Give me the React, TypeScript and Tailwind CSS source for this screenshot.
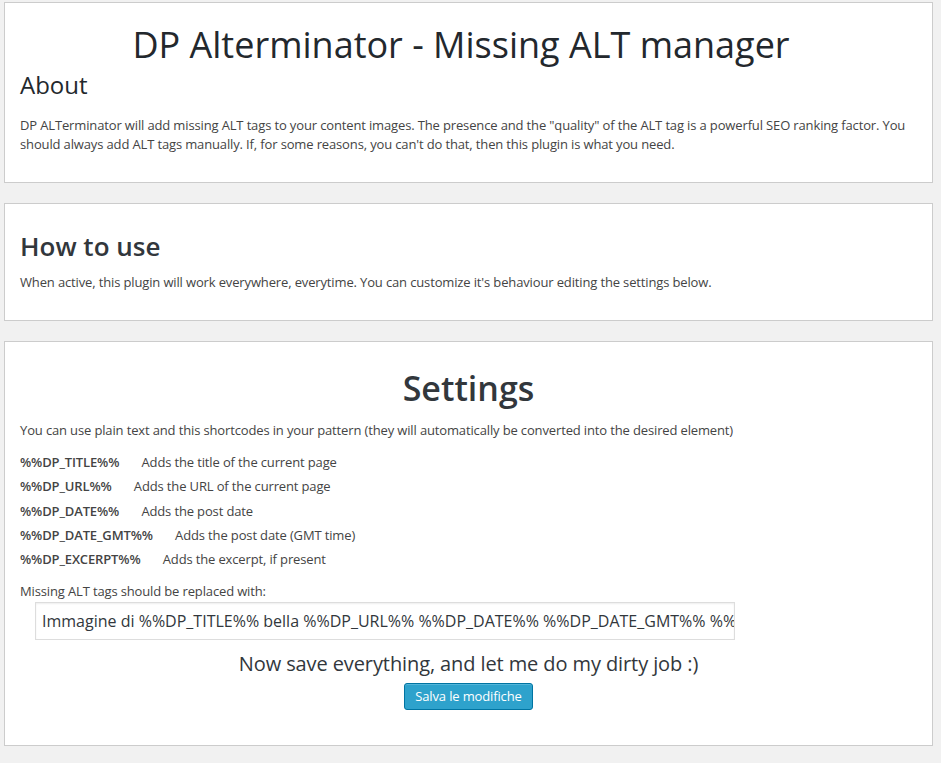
import React from "react";

const codes: [string, string][] = [
  ["%%DP_TITLE%%", "Adds the title of the current page"],
  ["%%DP_URL%%", "Adds the URL of the current page"],
  ["%%DP_DATE%%", "Adds the post date"],
  ["%%DP_DATE_GMT%%", "Adds the post date (GMT time)"],
  ["%%DP_EXCERPT%%", "Adds the excerpt, if present"],
];

export default function App() {
  return (
    <div
      className="min-h-[763px] w-full bg-[#f1f1f1] pt-[2px] pb-[17px]"
      style={{ fontFamily: '"Open Sans", "Liberation Sans", sans-serif' }}
    >
      <div className="ml-[4px] w-[929px] flex flex-col gap-[20px]">
        {/* About */}
        <section className="border border-[#cccccc] bg-white px-[15px] pt-[20px] pb-[28px]">
          <h1 className="pr-[15px] text-center text-[36px] leading-[43px] font-normal text-[#23282d]">
            DP Alterminator - Missing ALT manager
          </h1>
          <h2 className="mt-[4px] text-[24px] leading-[30px] font-normal text-[#23282d]">About</h2>
          <p className="mt-[16px] text-[13px] leading-[19px] tracking-[-0.14px] text-[#444444]">
            DP ALTerminator will add missing ALT tags to your content images. The presence and the "quality" of the ALT tag is a powerful SEO ranking factor. You should always add ALT tags manually. If, for some reasons, you can't do that, then this plugin is what you need.
          </p>
        </section>

        {/* How to use */}
        <section className="border border-[#cccccc] bg-white px-[15px] pt-[25px] pb-[28px]">
          <h2 className="text-[26px] leading-[34px] font-semibold text-[#32373c]">How to use</h2>
          <p className="mt-[10px] text-[13px] leading-[19px] tracking-[-0.14px] text-[#444444]">
            When active, this plugin will work everywhere, everytime. You can customize it's behaviour editing the settings below.
          </p>
        </section>

        {/* Settings */}
        <section className="border border-[#cccccc] bg-white px-[15px] pt-[24px] pb-[35px]">
          <h2 className="text-center text-[34px] leading-[44px] font-semibold text-[#32373c]">Settings</h2>
          <p className="mt-[11px] text-[13px] leading-[19px] tracking-[-0.14px] text-[#444444]">
            You can use plain text and this shortcodes in your pattern (they will automatically be converted into the desired element)
          </p>
          <div className="mt-[10px] flex flex-col">
            {codes.map(([c, d]) => (
              <div key={c} className="text-[13px] leading-[24.3px] tracking-[-0.14px] text-[#444444]">
                <span className="font-semibold">{c}</span>
                <span className="ml-[19px]"> {d}</span>
              </div>
            ))}
          </div>
          <p className="mt-[11px] text-[13px] leading-[19px] tracking-[-0.14px] text-[#444444]">Missing ALT tags should be replaced with:</p>
          <div className="ml-[15px] mt-[1px] w-[700px] h-[38px] border border-[#dddddd] bg-white shadow-[inset_0_1px_2px_rgba(0,0,0,0.07)] flex items-center overflow-hidden">
            <span className="pl-[6px] whitespace-nowrap text-[16px] text-[#32373c]">
              Immagine di %%DP_TITLE%% bella %%DP_URL%% %%DP_DATE%% %%DP_DATE_GMT%% %%DP_EXCERPT%%
            </span>
          </div>
          <p className="mt-[10px] text-center text-[20px] leading-[27px] tracking-[-0.1px] text-[#32373c]">
            Now save everything, and let me do my dirty job :)
          </p>
          <div className="mt-[6px] flex justify-center">
            <button className="h-[27px] px-[10px] rounded-[3px] border border-[#0074a2] bg-[#2ea2cc] text-[13px] leading-[25px] tracking-[-0.14px] text-white shadow-[inset_0_1px_0_rgba(120,200,230,0.5)]">
              Salva le modifiche
            </button>
          </div>
        </section>
      </div>
    </div>
  );
}
